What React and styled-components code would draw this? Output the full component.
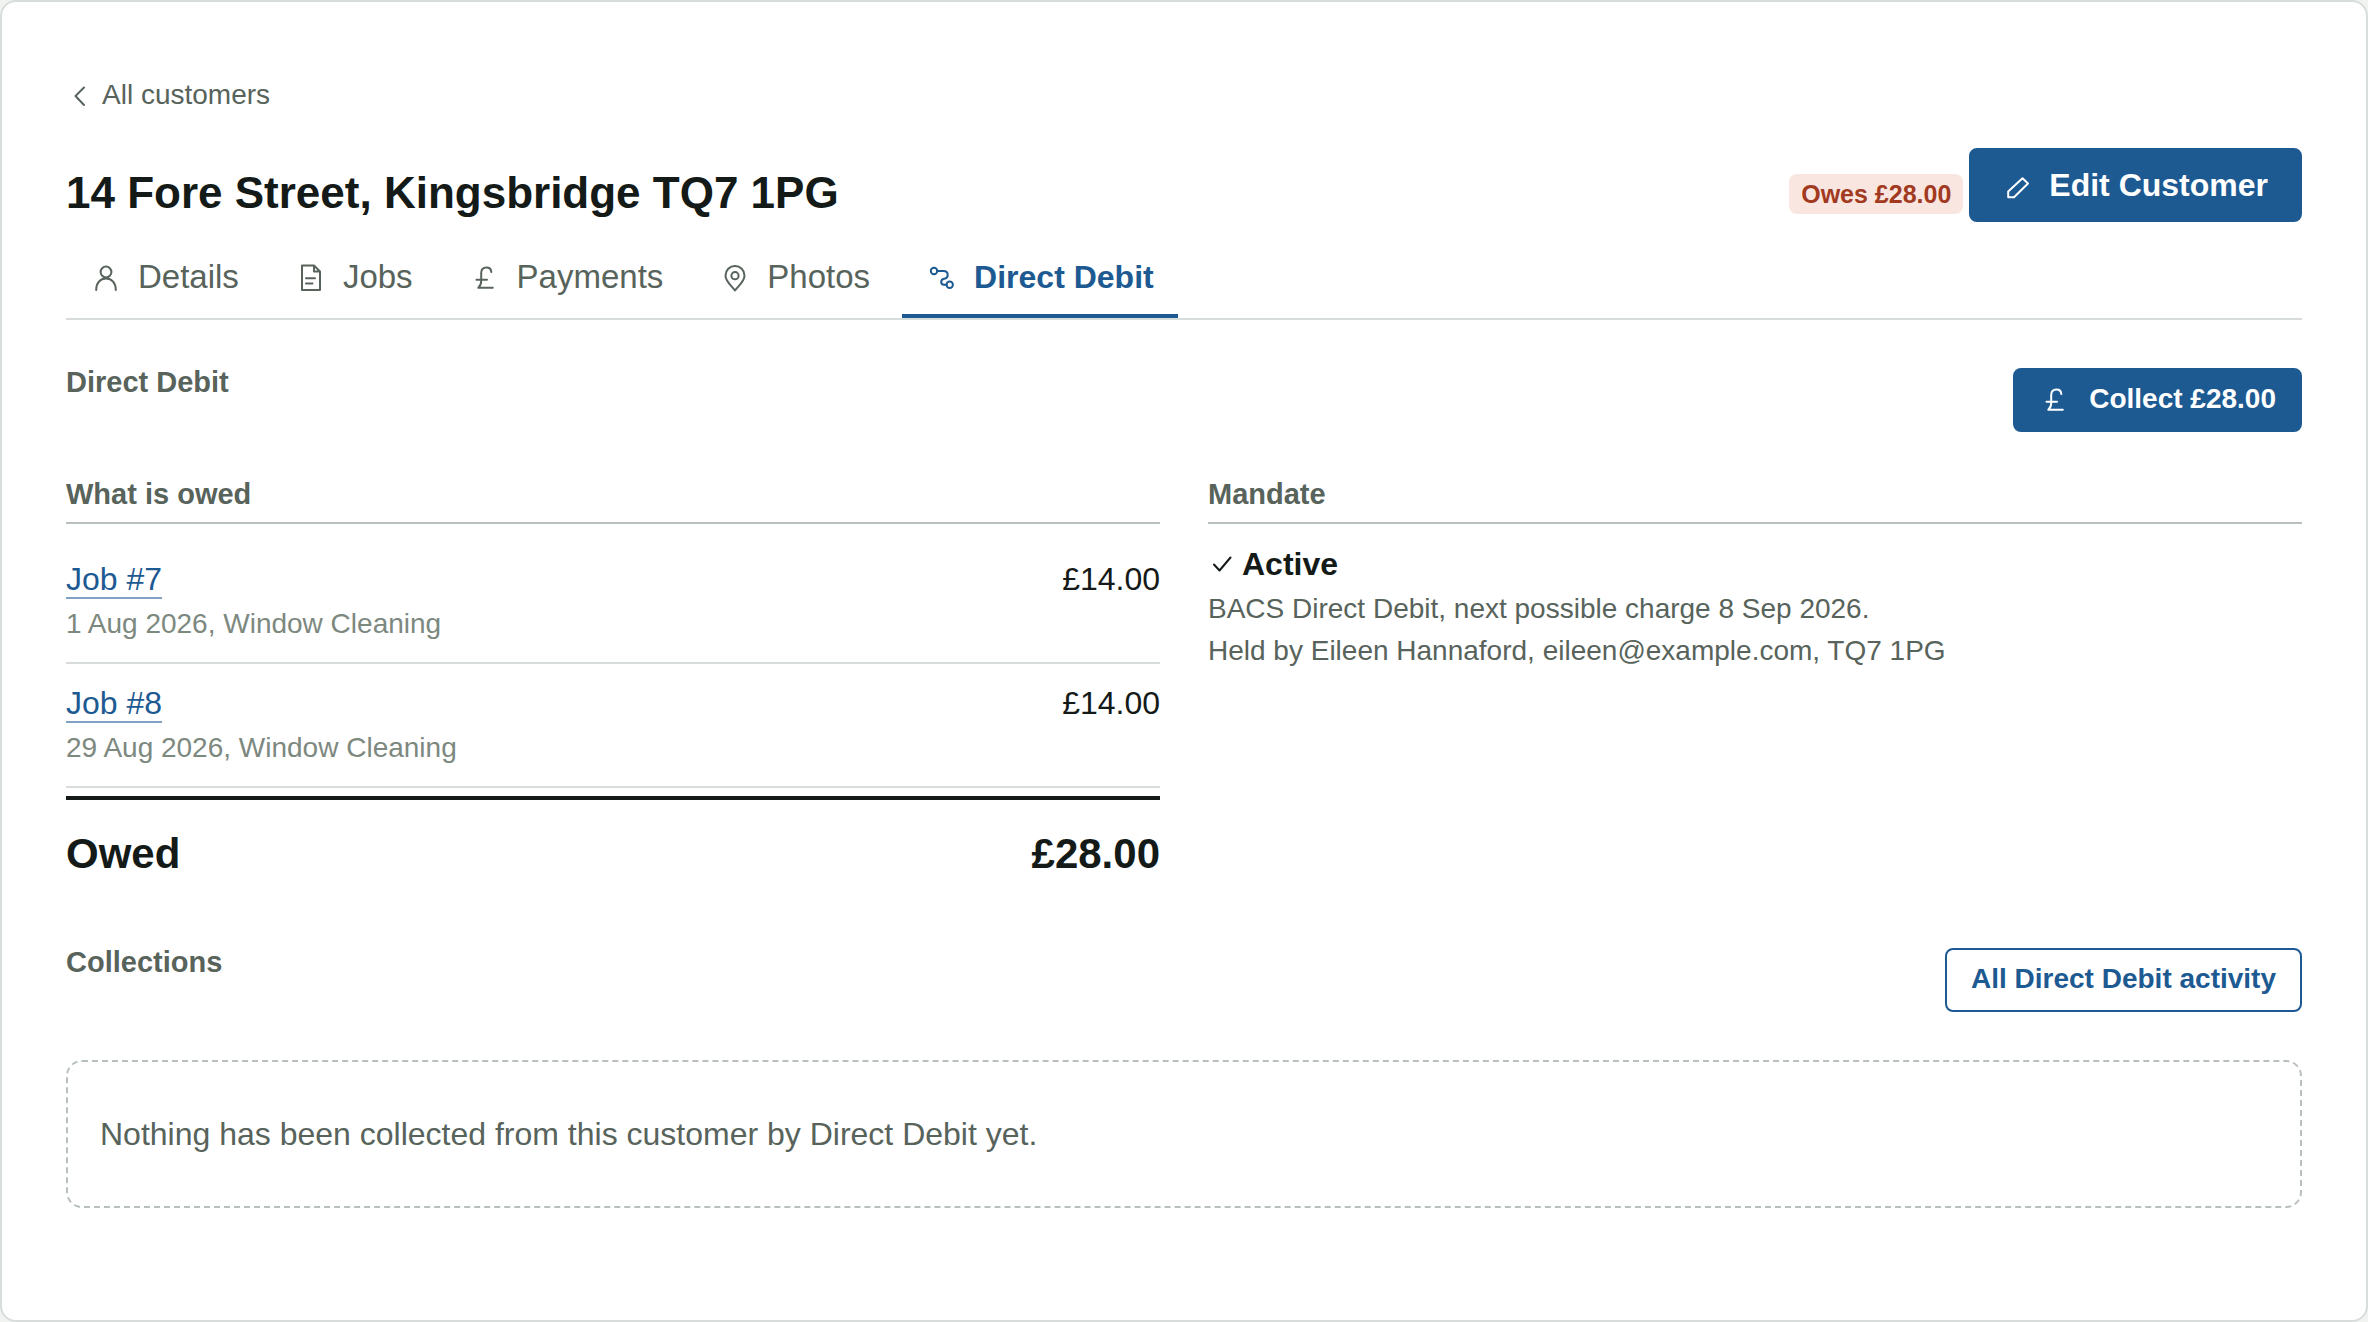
import React from 'react';
import styled, { createGlobalStyle } from 'styled-components';

const ink = '#141a17';
const muted = '#57635b';
const subtle = '#7d887f';
const blue = '#1d5a92';
const rule = '#d8dddb';
const ruleStrong = '#b8c0bd';

const GlobalStyle = createGlobalStyle`
  * {
    box-sizing: border-box;
  }

  body {
    margin: 0;
    background: #f1f3f1;
    color: ${ink};
    font-family: 'Liberation Sans', Arial, sans-serif;
    font-size: 32px;
  }

  h1, h2, h3, p {
    margin: 0;
  }
`;

const Card = styled.main`
  min-height: 100vh;
  padding: 72px 64px;
  background: #fff;
  border: 2px solid ${rule};
  border-radius: 16px;
`;

const BackLink = styled.a`
  display: inline-flex;
  align-items: center;
  gap: 8px;
  color: ${muted};
  font-size: 28px;
  line-height: 42px;
  text-decoration: none;
  vertical-align: top;
`;

const Header = styled.header`
  display: flex;
  justify-content: space-between;
  align-items: flex-end;
  margin-top: 32px;
`;

const Title = styled.h1`
  font-size: 44px;
  line-height: 58px;
`;

const Actions = styled.div`
  display: flex;
  align-items: flex-end;
  gap: 6px;
`;

const Badge = styled.span`
  margin-bottom: 8px;
  padding: 0 12px;
  background: #fae6e1;
  border-radius: 8px;
  color: #a13a20;
  font-size: 25px;
  font-weight: bold;
  line-height: 40px;
`;

const Button = styled.button`
  display: inline-flex;
  align-items: center;
  gap: ${({ $large }) => ($large ? '14px' : '18px')};
  height: ${({ $large }) => ($large ? '74px' : '64px')};
  padding: ${({ $large }) => ($large ? '0 32px' : '0 24px 2px')};
  background: ${({ $outline }) => ($outline ? '#fff' : blue)};
  border: 2px solid ${blue};
  border-radius: 8px;
  color: ${({ $outline }) => ($outline ? blue : '#fff')};
  font-family: inherit;
  font-size: ${({ $large }) => ($large ? '32px' : '28px')};
  font-weight: bold;
  cursor: pointer;
`;

const Tabs = styled.nav`
  display: flex;
  gap: 8px;
  margin-top: 18px;
  border-bottom: 2px solid ${rule};
`;

const Tab = styled.a`
  display: flex;
  align-items: center;
  gap: 16px;
  height: 78px;
  padding: 0 24px;
  border-bottom: 4px solid ${({ $active }) => ($active ? blue : 'transparent')};
  color: ${({ $active }) => ($active ? blue : muted)};
  font-size: ${({ $active }) => ($active ? '32px' : '33px')};
  font-weight: ${({ $active }) => ($active ? 'bold' : 'normal')};
  text-decoration: none;
`;

const SectionHead = styled.div`
  display: flex;
  justify-content: space-between;
  align-items: flex-start;
  min-height: 64px;
  margin-top: ${({ $spaced }) => ($spaced ? '64px' : '48px')};
`;

const Heading = styled.h2`
  color: ${muted};
  font-size: 29px;
  line-height: 28px;
`;

const ColumnHeading = styled(Heading).attrs({ as: 'h3' })`
  padding-bottom: 14px;
  border-bottom: 2px solid ${ruleStrong};
`;

const Columns = styled.div`
  display: grid;
  grid-template-columns: 1fr 1fr;
  gap: 48px;
  margin-top: 48px;
`;

const OwedTable = styled.table`
  width: 100%;
  margin: 16px 0 8px;
  border-spacing: 0;
`;

const Cell = styled.td`
  padding: 16px 0;
  border-bottom: 2px solid ${rule};
  line-height: 46px;
  text-align: ${({ $amount }) => ($amount ? 'right' : 'left')};
  vertical-align: top;
`;

const JobLink = styled.a`
  border-bottom: 2px solid #80a2c3;
  color: ${blue};
  text-decoration: none;
`;

const JobNote = styled.div`
  color: ${subtle};
  font-size: 28px;
  line-height: 44px;
`;

const Total = styled.div`
  display: flex;
  justify-content: space-between;
  padding-top: 24px;
  border-top: 4px solid ${ink};
  font-size: 42px;
  font-weight: bold;
  line-height: 60px;
`;

const Status = styled.p`
  display: flex;
  align-items: center;
  gap: 6px;
  padding-top: 16px;
  font-weight: bold;
  line-height: 48px;
`;

const Detail = styled.p`
  color: ${muted};
  font-size: 28px;
  line-height: 42px;
`;

const Empty = styled.p`
  margin-top: 48px;
  padding: 48px 32px;
  border: 2px dashed ${ruleStrong};
  border-radius: 16px;
  color: ${muted};
  line-height: 48px;
`;

const Svg = styled.svg`
  flex: none;
  fill: none;
  stroke: currentColor;
  stroke-width: 2;
  stroke-linecap: round;
  stroke-linejoin: round;
`;

const icons = {
  user: (
    <>
      <circle cx="16" cy="11" r="5.4" />
      <path d="M6.2 29c0-7 4-11.5 9.8-11.5s9.8 4.5 9.8 11.5" />
    </>
  ),
  file: <path d="M7 4.5h12l6 6V29H7zM19 4.5v6h6M11 17.3h9M11 22.5h6.5" />,
  pound: <path d="M22.300 11c-.2-3-2-4.500-4.800-4.500-3.300 0-5.300 2-5.300 5.500v8c0 3-.8 5-2.900 6.800h14.500M7.500 18.800h10.500" />,
  pin: (
    <>
      <circle cx="16" cy="14.7" r="3.6" />
      <path d="M16 29.5c-3-4.5-9.5-8.7-9.5-15a9.5 9.5 0 0 1 19 0c0 6.3-6.5 10.5-9.5 15z" />
    </>
  ),
  route: (
    <>
      <circle cx="8" cy="10" r="3.2" />
      <circle cx="23.7" cy="23.7" r="3.2" />
      <path d="M11.2 10h6.3c2.7 0 4.2 1.7 4.2 4s-1.5 3.5-3.4 3.7c-2 .3-3.1 1.300-3.1 3 0 2 1 3 2.8 3h2.5" />
    </>
  ),
  pencil: <path d="M19.5 9.2l5.500 5.300L11 28.300H5.200v-5.800z" />,
  chevron: <path d="M18 6.5L9.5 15l8.5 9" />,
  check: <path d="M6 14.5l5.5 6L22.5 7.5" />,
};

function Icon({ name, size = 32 }) {
  return (
    <Svg width={size} height={size} viewBox={`0 0 ${size} ${size}`} aria-hidden="true">
      {icons[name]}
    </Svg>
  );
}

const tabs = [
  { label: 'Details', icon: 'user' },
  { label: 'Jobs', icon: 'file' },
  { label: 'Payments', icon: 'pound' },
  { label: 'Photos', icon: 'pin' },
  { label: 'Direct Debit', icon: 'route', active: true },
];

const jobs = [
  { id: 7, note: '1 Aug 2026, Window Cleaning', amount: '£14.00' },
  { id: 8, note: '29 Aug 2026, Window Cleaning', amount: '£14.00' },
];

export default function App() {
  return (
    <>
      <GlobalStyle />
      <Card>
        <BackLink href="#customers">
          <Icon name="chevron" size={28} />
          All customers
        </BackLink>

        <Header>
          <Title>14 Fore Street, Kingsbridge TQ7 1PG</Title>
          <Actions>
            <Badge>Owes £28.00</Badge>
            <Button type="button" $large>
              <Icon name="pencil" />
              Edit Customer
            </Button>
          </Actions>
        </Header>

        <Tabs>
          {tabs.map(({ label, icon, active }) => (
            <Tab
              key={label}
              href={`#${icon}`}
              $active={active}
              aria-current={active ? 'page' : undefined}
            >
              <Icon name={icon} />
              {label}
            </Tab>
          ))}
        </Tabs>

        <SectionHead>
          <Heading>Direct Debit</Heading>
          <Button type="button">
            <Icon name="pound" />
            Collect £28.00
          </Button>
        </SectionHead>

        <Columns>
          <section>
            <ColumnHeading>What is owed</ColumnHeading>
            <OwedTable>
              <tbody>
                {jobs.map((job) => (
                  <tr key={job.id}>
                    <Cell>
                      <JobLink href={`#job-${job.id}`}>Job #{job.id}</JobLink>
                      <JobNote>{job.note}</JobNote>
                    </Cell>
                    <Cell $amount>{job.amount}</Cell>
                  </tr>
                ))}
              </tbody>
            </OwedTable>
            <Total>
              <span>Owed</span>
              <span>£28.00</span>
            </Total>
          </section>

          <section>
            <ColumnHeading>Mandate</ColumnHeading>
            <Status>
              <Icon name="check" size={28} />
              Active
            </Status>
            <Detail>BACS Direct Debit, next possible charge 8 Sep 2026.</Detail>
            <Detail>Held by Eileen Hannaford, eileen@example.com, TQ7 1PG</Detail>
          </section>
        </Columns>

        <SectionHead $spaced>
          <Heading>Collections</Heading>
          <Button type="button" $outline>
            All Direct Debit activity
          </Button>
        </SectionHead>

        <Empty>Nothing has been collected from this customer by Direct Debit yet.</Empty>
      </Card>
    </>
  );
}
